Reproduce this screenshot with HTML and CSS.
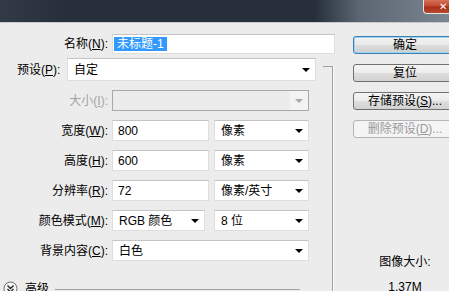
FILE: index.html
```html
<!DOCTYPE html>
<html lang="zh-CN">
<head>
    <meta charset="UTF-8">
    <meta name="viewport" content="width=device-width, initial-scale=1.0">
    <title>新建</title>
    <link rel="stylesheet" href="styles.css">
</head>
<body>

    <div class="titlebar">
        <div class="close-btn">✕</div>
    </div>

    <div class="dialog">
        <div class="main">
            <div class="row name-row">
                <span class="label">名称(<u>N</u>):</span>
                <div class="field w-name"><span class="sel">未标题-1</span></div>
            </div>

            <div class="group">
                <div class="row preset-row">
                    <span class="label preset-label">预设(<u>P</u>):</span>
                    <div class="field select w-preset"><span>自定</span><i class="arrow"></i></div>
                </div>
                <div class="row">
                    <span class="label disabled">大小(<u>I</u>):</span>
                    <div class="field select w-full off"><span></span><span class="off-btn"><i class="arrow"></i></span></div>
                </div>
                <div class="row">
                    <span class="label">宽度(<u>W</u>):</span>
                    <div class="field w-num">800</div>
                    <div class="field select w-unit"><span>像素</span><i class="arrow"></i></div>
                </div>
                <div class="row">
                    <span class="label">高度(<u>H</u>):</span>
                    <div class="field w-num">600</div>
                    <div class="field select w-unit"><span>像素</span><i class="arrow"></i></div>
                </div>
                <div class="row">
                    <span class="label">分辨率(<u>R</u>):</span>
                    <div class="field w-num">72</div>
                    <div class="field select w-unit"><span>像素/英寸</span><i class="arrow"></i></div>
                </div>
                <div class="row">
                    <span class="label">颜色模式(<u>M</u>):</span>
                    <div class="field select w-mode"><span>RGB 颜色</span><i class="arrow"></i></div>
                    <div class="field select w-unit bits"><span>8 位</span><i class="arrow"></i></div>
                </div>
                <div class="row">
                    <span class="label">背景内容(<u>C</u>):</span>
                    <div class="field select w-full"><span>白色</span><i class="arrow"></i></div>
                </div>

                <div class="advanced">
                    <svg class="adv-icon" width="15" height="15" viewBox="0 0 15 15">
                        <circle cx="7.5" cy="7.5" r="6.5" fill="#f6f6f6" stroke="#6e6e6e"/>
                        <path d="M4.5 4.5 L7.5 7.5 L10.5 4.5 M4.5 8 L7.5 11 L10.5 8" fill="none" stroke="#222" stroke-width="1.3"/>
                    </svg>
                    <span>高级</span>
                    <div class="adv-line"></div>
                </div>
            </div>
        </div>

        <div class="side">
            <button class="btn default">确定</button>
            <button class="btn">复位</button>
            <button class="btn">存储预设(<u>S</u>)...</button>
            <button class="btn" disabled>删除预设(<u>D</u>)...</button>

            <div class="size-info">
                <div>图像大小:</div>
                <div class="size-value">1.37M</div>
            </div>
        </div>
    </div>

</body>
</html>
```

FILE: styles.css
```css
body {
    margin: 0;
    width: 449px;
    height: 291px;
    overflow: hidden;
    background: #ececec;
    font-family: 'Liberation Sans', 'Noto Sans CJK SC', sans-serif;
    font-size: 12px;
    color: #000;
}

u {
    text-decoration: underline;
}

.titlebar {
    height: 22px;
    border-bottom: 1px solid #c9c9c9;
    background: linear-gradient(to right, #323a45 0, #27303a 15%, #27303a 70%, #5b6672 80%, #7b8691 100%);
    display: flex;
    justify-content: flex-end;
}

.close-btn {
    width: 40px;
    height: 14px;
    margin-right: -14px;
    box-sizing: border-box;
    border: 1px solid #e6e6e6;
    border-top: none;
    border-radius: 0 0 0 4px;
    background: linear-gradient(#d8705a, #c04a30 45%, #a82e17 55%, #b84a2f);
    color: #fff;
    font-size: 10px;
    line-height: 13px;
    text-align: center;
}

.dialog {
    display: flex;
    width: 470px;
}

.main {
    width: 345px;
    flex-shrink: 0;
    padding-top: 11px;
}

.side {
    width: 104px;
    flex-shrink: 0;
    margin-left: 8px;
    padding-top: 13px;
}

.row {
    display: flex;
    align-items: center;
    height: 21px;
    margin-top: 9px;
}

.name-row {
    height: 20px;
    margin-top: 0;
}

.preset-row {
    height: 23px;
    margin-top: 4px;
}

.label {
    width: 108px;
    margin-right: 4px;
    flex-shrink: 0;
    text-align: right;
    white-space: nowrap;
    line-height: 14px;
}

.preset-label {
    width: 46px;
    margin-left: 17px;
    text-align: left;
}

.disabled {
    color: #a3a3a3;
}

.field {
    height: 100%;
    box-sizing: border-box;
    background: #fff;
    border: 1px solid #dedede;
    border-top-color: #c4c4c4;
    display: flex;
    align-items: center;
    padding: 0 5px 0 5px;
    line-height: 14px;
    white-space: nowrap;
    flex-shrink: 0;
}

.select {
    justify-content: space-between;
    padding-left: 6px;
}

.arrow {
    width: 0;
    height: 0;
    border-left: 4px solid transparent;
    border-right: 4px solid transparent;
    border-top: 4px solid #000;
}

.off {
    background: #ececec;
    border: 1px solid #a9a9a9;
    padding: 0;
    align-items: stretch;
}

.off-btn {
    width: 18px;
    background: #f3f3f3;
    display: flex;
    align-items: center;
    justify-content: center;
}

.off-btn .arrow {
    border-top-color: #a8a8a8;
}

.w-name {
    width: 223px;
    padding-left: 1px;
}

.sel {
    background: #3399ff;
    color: #fff;
    padding: 0 3px 0 3px;
}

.w-preset {
    width: 249px;
}

.w-full {
    width: 197px;
}

.w-num {
    width: 97px;
}

.w-unit {
    width: 95px;
    margin-left: 5px;
}

.w-mode {
    width: 93px;
}

.bits {
    margin-left: 9px;
}

.group {
    position: relative;
    width: 333px;
}

.group::after {
    content: "";
    position: absolute;
    top: 8px;
    right: 0;
    bottom: -40px;
    width: 9px;
    border-top: 1px solid #a2a2a2;
    border-right: 1px solid #a2a2a2;
    box-shadow: 1px 0 0 #fafafa;
}

.advanced {
    display: flex;
    align-items: center;
    height: 15px;
    margin-top: 20px;
    margin-left: 3px;
    line-height: 14px;
}

.adv-icon {
    margin-right: 7px;
}

.adv-line {
    flex: 1;
    height: 1px;
    background: #a2a2a2;
    margin: 2px 33px 0 6px;
}

.btn {
    display: block;
    width: 104px;
    height: 18px;
    box-sizing: border-box;
    margin: 0 0 10px 0;
    padding: 0;
    border: 1px solid #707070;
    border-radius: 3px;
    background: linear-gradient(#f4f4f4 0, #ececec 48%, #dddddd 52%, #d2d2d2 100%);
    font-family: inherit;
    font-size: 12px;
    line-height: 14px;
    color: #000;
}

.btn.default {
    border-color: #3c7fb1;
    box-shadow: inset 0 0 0 1px #9ad6f4;
    background: linear-gradient(#f2f2f2 0, #ebebeb 48%, #dddddd 52%, #cfcfcf 100%);
}

.btn:disabled {
    border-color: #b2b6b8;
    background: #f4f4f4;
    color: #9a9a9a;
}

/* margin collapses with the last button's bottom margin */
.size-info {
    margin-top: 117px;
    text-align: center;
    line-height: 14px;
}

.size-value {
    margin-top: 11px;
}
```
